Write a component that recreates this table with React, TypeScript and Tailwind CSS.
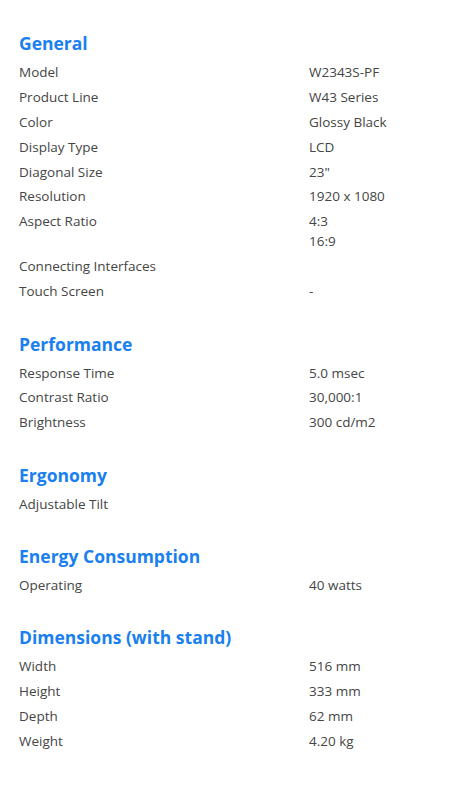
type Spec = { label: string; values: string[] };
type Section = { title: string; specs: Spec[] };

const sections: Section[] = [
  {
    title: 'General',
    specs: [
      { label: 'Model', values: ['W2343S-PF'] },
      { label: 'Product Line', values: ['W43 Series'] },
      { label: 'Color', values: ['Glossy Black'] },
      { label: 'Display Type', values: ['LCD'] },
      { label: 'Diagonal Size', values: ['23"'] },
      { label: 'Resolution', values: ['1920 x 1080'] },
      { label: 'Aspect Ratio', values: ['4:3', '16:9'] },
      { label: 'Connecting Interfaces', values: [] },
      { label: 'Touch Screen', values: ['-'] }
    ]
  },
  {
    title: 'Performance',
    specs: [
      { label: 'Response Time', values: ['5.0 msec'] },
      { label: 'Contrast Ratio', values: ['30,000:1'] },
      { label: 'Brightness', values: ['300 cd/m2'] }
    ]
  },
  {
    title: 'Ergonomy',
    specs: [{ label: 'Adjustable Tilt', values: [] }]
  },
  {
    title: 'Energy Consumption',
    specs: [{ label: 'Operating', values: ['40 watts'] }]
  },
  {
    title: 'Dimensions (with stand)',
    specs: [
      { label: 'Width', values: ['516 mm'] },
      { label: 'Height', values: ['333 mm'] },
      { label: 'Depth', values: ['62 mm'] },
      { label: 'Weight', values: ['4.20 kg'] }
    ]
  }
];

function SpecRow({ spec }: { spec: Spec }) {
  return (
    <div className="flex mb-[4.9px] text-[13.5px] leading-[20px] text-[#454545]">
      <div className="w-[290px] shrink-0">{spec.label}</div>
      <div className="flex flex-col">
        {spec.values.map((v) => (
          <span key={v}>{v}</span>
        ))}
      </div>
    </div>
  );
}

export default function App() {
  return (
    <div
      className="min-h-[800px] bg-white pl-[19px] pt-[30px]"
      style={{ fontFamily: '"Open Sans", "Liberation Sans", sans-serif' }}
    >
      <div className="flex flex-col gap-[24.5px]">
        {sections.map((s) => (
          <section key={s.title}>
            <h2 className="mb-[6px] text-[17.5px] leading-[26px] font-bold text-[#1a80ef]">{s.title}</h2>
            {s.specs.map((spec) => (
              <SpecRow key={spec.label} spec={spec} />
            ))}
          </section>
        ))}
      </div>
    </div>
  );
}
